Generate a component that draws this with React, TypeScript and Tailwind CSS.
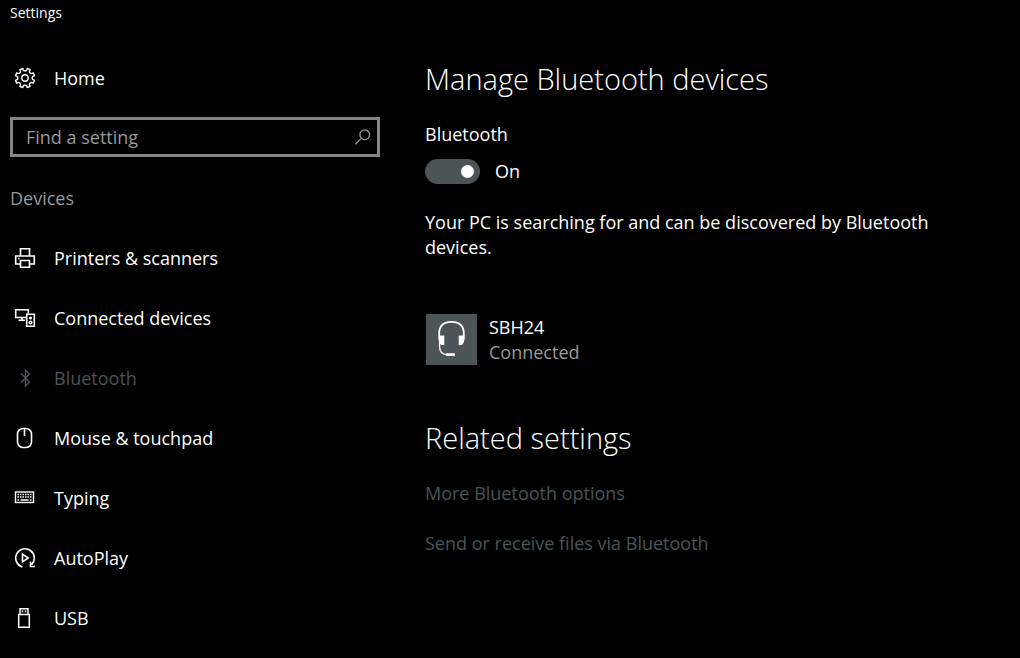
import React, { useState } from 'react';

type NavItem = {
  id: string;
  label: string;
  icon: React.ReactNode;
};

const iconProps = {
  width: 22,
  height: 22,
  viewBox: '0 0 22 22',
  fill: 'none',
  stroke: 'currentColor',
  strokeWidth: 1.4,
  'aria-hidden': true,
};

const GearIcon = () => (
  <svg {...iconProps}>
    <path
      strokeLinejoin="round"
      d="M8.7 1.5 L9.6 3.5 Q11 4.1 12.4 3.5 L13.3 1.5 L16.1 2.7 L15.3 4.7 Q15.8 6.2 17.3 6.7 L19.3 5.9 L20.5 8.7 L18.5 9.6 Q17.9 11 18.5 12.4 L20.5 13.3 L19.3 16.1 L17.3 15.3 Q15.8 15.8 15.3 17.3 L16.1 19.3 L13.3 20.5 L12.4 18.5 Q11 17.9 9.6 18.5 L8.7 20.5 L5.9 19.3 L6.7 17.3 Q6.2 15.8 4.7 15.3 L2.7 16.1 L1.5 13.3 L3.5 12.4 Q4.1 11 3.5 9.6 L1.5 8.7 L2.7 5.9 L4.7 6.7 Q6.2 6.2 6.7 4.7 L5.9 2.7 Z"
    />
    <circle cx="11" cy="11" r="3.2" />
  </svg>
);

const PrinterIcon = () => (
  <svg {...iconProps} strokeWidth={1.6}>
    <path d="M6.5 9 V1.7 H15.5 V9 M6.5 17 H1.7 V9 H20.3 V17 H15.5" />
    <path d="M6.5 13.5 H15.5 V20.3 H6.5 Z" />
    <path d="M4 11.5 H5.5" />
  </svg>
);

const ConnectedIcon = () => (
  <svg {...iconProps} strokeWidth={1.6}>
    <path d="M12 10.5 H1.7 V2.7 H14.3 V6.5 M8 10.5 V13 M4.5 13.2 H11" />
    <path d="M12.7 7.2 H20.3 V19.3 H12.7 Z" />
    <circle cx="16.5" cy="11" r="0.8" fill="currentColor" />
    <circle cx="16.5" cy="15.5" r="1.3" />
  </svg>
);

const BluetoothIcon = () => (
  <svg {...iconProps}>
    <path d="M7 6.5 L15.5 15 L11.5 19 V3 L15.5 7 L7 15.5" />
  </svg>
);

const MouseIcon = () => (
  <svg {...iconProps} strokeWidth={1.6}>
    <rect x="3.5" y="1.5" width="14" height="19" rx="5.5" />
    <path d="M10.5 2 V9" />
  </svg>
);

const KeyboardIcon = () => (
  <svg {...iconProps}>
    <rect x="1.5" y="5" width="18" height="10.5" />
    <path strokeDasharray="1.5 1" d="M3.5 7.5 H18 M3.5 10 H18" />
    <path d="M3.5 13 H5 M6.5 13 H14.5 M16 13 H17.5" />
  </svg>
);

const AutoPlayIcon = () => (
  <svg {...iconProps} strokeWidth={1.6}>
    <path d="M8.5 20 A9.3 9.3 0 1 1 17.5 17.7 M16.5 14.5 V19.5 H21" />
    <path d="M8.5 7.2 L14.2 11 L8.5 14.8 Z" />
  </svg>
);

const UsbIcon = () => (
  <svg {...iconProps} strokeWidth={1.5}>
    <path d="M4.7 7.5 H15.3 V20.3 H4.7 Z M6 7.5 V1.7 H14 V7.5" />
    <path d="M8.5 3.5 V5.2 M11.5 3.5 V5.2" />
  </svg>
);

const SearchIcon = () => (
  <svg {...iconProps} width={20} height={20}>
    <circle cx="14" cy="8.5" r="5.3" />
    <path d="M10.2 12.5 L3.7 19" />
  </svg>
);

const HeadsetIcon = () => (
  <svg width="51" height="51" viewBox="0 0 51 51" fill="none" stroke="white" aria-hidden="true">
    <path
      strokeWidth="1.8"
      d="M13.2 25 V19.5 C13.2 11.5 17.5 7.8 25.5 7.8 C33.5 7.8 37.8 11.5 37.8 19.5 V25"
    />
    <path strokeWidth="1.3" d="M13.6 28 V32.5 C13.6 38.5 16 40.5 21 40.5" />
    <path
      fill="white"
      stroke="none"
      d="M14 21.5 H18.3 V31 H15 Q12.5 28.5 12.5 25 Z M37 21.5 H32.7 V31 H36 Q38.5 28.5 38.5 25 Z"
    />
    <rect x="20" y="39.2" width="9" height="2.8" rx="1" fill="white" stroke="none" />
  </svg>
);

const navItems: NavItem[] = [
  { id: 'printers', label: 'Printers & scanners', icon: <PrinterIcon /> },
  { id: 'connected', label: 'Connected devices', icon: <ConnectedIcon /> },
  { id: 'bluetooth', label: 'Bluetooth', icon: <BluetoothIcon /> },
  { id: 'mouse', label: 'Mouse & touchpad', icon: <MouseIcon /> },
  { id: 'typing', label: 'Typing', icon: <KeyboardIcon /> },
  { id: 'autoplay', label: 'AutoPlay', icon: <AutoPlayIcon /> },
  { id: 'usb', label: 'USB', icon: <UsbIcon /> },
];

const App: React.FC = () => {
  const [active, setActive] = useState('bluetooth');
  const [search, setSearch] = useState('');
  const [enabled, setEnabled] = useState(true);

  return (
    <div className="min-h-screen bg-black text-white text-[18px] leading-[25px] font-['Open_Sans','Noto_Sans',sans-serif]">
      <header className="px-[10px] pt-1 text-[14px] leading-[18px]">Settings</header>

      <div className="flex">
        {/* Sidebar */}
        <aside className="w-[380px] shrink-0 pl-[10px] pt-[26px]">
          <button className="flex h-[60px] w-full items-center gap-[18px] pl-1 text-left">
            <GearIcon />
            Home
          </button>

          <form
            role="search"
            onSubmit={(e) => e.preventDefault()}
            className="mt-[9px] flex h-10 items-center border-3 border-[#858585] pl-[13px] pr-[5px] text-[#999999]"
          >
            <input
              type="text"
              aria-label="Find a setting"
              placeholder="Find a setting"
              value={search}
              onChange={(e) => setSearch(e.target.value)}
              className="min-w-0 flex-1 bg-transparent placeholder:text-[#999999] focus:outline-none"
            />
            <button type="submit" aria-label="Search">
              <SearchIcon />
            </button>
          </form>

          <h2 className="mt-[29px] mb-[17px] text-[#999999]">Devices</h2>

          <nav>
            {navItems.map((item) => (
              <button
                key={item.id}
                onClick={() => setActive(item.id)}
                className={`flex h-[60px] w-full items-center gap-[18px] pl-1 text-left ${
                  active === item.id ? 'text-[#4a5459]' : 'text-white'
                }`}
              >
                {item.icon}
                {item.label}
              </button>
            ))}
          </nav>
        </aside>

        {/* Content */}
        <main className="min-w-0 flex-1 pl-[45px] pr-[80px] pt-[37px]">
          <h1 className="text-[29px] leading-10 font-light">Manage Bluetooth devices</h1>

          <label htmlFor="bluetooth" className="mt-[23px] block">
            Bluetooth
          </label>
          <div className="mt-3 flex items-center gap-[15px]">
            <input
              id="bluetooth"
              type="checkbox"
              role="switch"
              checked={enabled}
              onChange={(e) => setEnabled(e.target.checked)}
              className="flex h-[25px] w-[55px] appearance-none items-center rounded-full bg-[#4a5459] px-[6px] before:size-[13px] before:rounded-full before:bg-white before:content-[''] checked:justify-end"
            />
            <span>{enabled ? 'On' : 'Off'}</span>
          </div>

          <p className="mt-[26px]">
            Your PC is searching for and can be discovered by Bluetooth devices.
          </p>

          {/* Paired device */}
          <div className="mt-[54px] flex items-center gap-3 pl-px">
            <div className="size-[51px] bg-[#4a5459]">
              <HeadsetIcon />
            </div>
            <div>
              <p>SBH24</p>
              <p className="text-[#999999]">Connected</p>
            </div>
          </div>

          <h2 className="mt-[53px] text-[29px] leading-10 font-light">Related settings</h2>
          <div className="mt-[23px] flex flex-col items-start gap-[25px] text-[#4a5459]">
            <a href="#options">More Bluetooth options</a>
            <a href="#files">Send or receive files via Bluetooth</a>
          </div>
        </main>
      </div>
    </div>
  );
};

export default App;
